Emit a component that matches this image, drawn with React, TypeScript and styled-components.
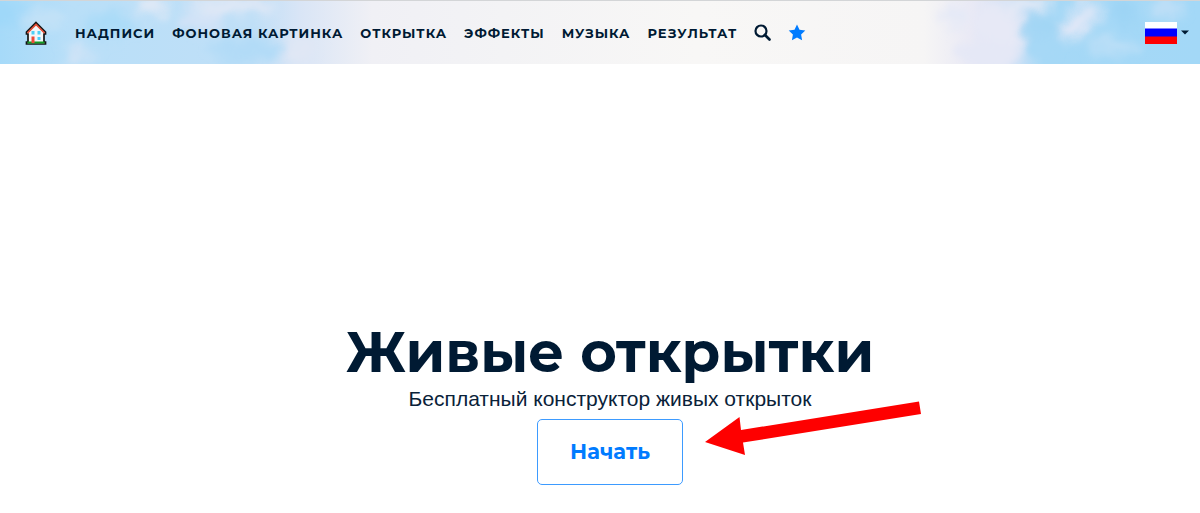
import React from "react";
import styled, { createGlobalStyle } from "styled-components";

const GlobalStyle = createGlobalStyle`
  *, *::before, *::after { box-sizing: border-box; }
  body {
    margin: 0;
    background: #fff;
    color: #001a33;
    font-family: Montserrat, Inter, "Liberation Sans", sans-serif;
  }
`;

const Header = styled.header`
  position: relative;
  display: flex;
  align-items: center;
  min-height: 64px;
  padding: 0 11px 0 24px;
  border-top: 1px solid #d3d5d7;
  overflow: hidden;
`;

const SkyArt = styled.svg`
  position: absolute;
  inset: 0;
  width: 100%;
  height: 100%;
  z-index: -1;
`;

const HomeLink = styled.a`
  display: flex;
  margin-right: 27px;
`;

const Nav = styled.nav`
  display: flex;
  flex: 1;
  align-items: center;
  gap: 17px;
`;

const NavLink = styled.a`
  display: flex;
  color: #001a33;
  font-size: 13px;
  font-weight: 700;
  line-height: 20px;
  letter-spacing: 1px;
  text-transform: uppercase;
  text-decoration: none;
  white-space: nowrap;
`;

const IconButton = styled.button`
  display: flex;
  padding: 0;
  border: 0;
  background: none;
  color: #001a33;
  cursor: pointer;
`;

const LanguageButton = styled(IconButton)`
  align-items: center;
  gap: 4px;
`;

const Hero = styled.main`
  display: flex;
  flex-direction: column;
  align-items: center;
  padding: 256px 0 28px 20px;
`;

const Title = styled.h1`
  margin: 0;
  font-size: 56px;
  font-weight: 700;
  line-height: 64px;
  text-align: center;
`;

const Subtitle = styled.p`
  margin: 0 0 6px;
  color: #0a2239;
  font-family: "Liberation Sans", Arial, sans-serif;
  font-size: 21px;
  line-height: 29px;
  text-align: center;
`;

const Action = styled.div`
  position: relative;
`;

const StartButton = styled.button`
  display: block;
  padding: 16px 32px;
  border: 1px solid #3d9bff;
  border-radius: 5px;
  background: #fff;
  color: #007bff;
  font-family: inherit;
  font-size: 21px;
  font-weight: 700;
  line-height: 32px;
  cursor: pointer;
`;

const Arrow = styled.svg`
  position: absolute;
  left: 100%;
  bottom: 29px;
  margin-left: 21px;
`;

const Sky = () => (
  <SkyArt viewBox="0 0 1200 64" preserveAspectRatio="none" aria-hidden="true">
    <defs>
      <linearGradient id="sky" x1="0" x2="1" y1="0" y2="0">
        <stop offset="0" stopColor="#a6daf9" />
        <stop offset="0.06" stopColor="#b9dff8" />
        <stop offset="0.21" stopColor="#bfdff7" />
        <stop offset="0.25" stopColor="#d9e5f6" />
        <stop offset="0.31" stopColor="#f0f0f5" />
        <stop offset="0.42" stopColor="#f3f3f5" />
        <stop offset="0.58" stopColor="#f8f7f6" />
        <stop offset="0.77" stopColor="#f6f5f5" />
        <stop offset="0.81" stopColor="#e9e9f5" />
        <stop offset="0.84" stopColor="#d5e2f6" />
        <stop offset="0.87" stopColor="#a5d8f6" />
        <stop offset="1" stopColor="#a3d8f7" />
      </linearGradient>
      <filter id="soft" x="-10%" y="-50%" width="120%" height="200%">
        <feGaussianBlur stdDeviation="6" />
        <feTurbulence type="fractalNoise" baseFrequency="0.04" numOctaves="2" seed="4" result="noise" />
        <feGaussianBlur in="SourceGraphic" stdDeviation="6" result="clouds" />
        <feDisplacementMap in="clouds" in2="noise" scale="20" xChannelSelector="R" yChannelSelector="G" />
      </filter>
    </defs>
    <rect width="1200" height="64" fill="url(#sky)" />
    <g filter="url(#soft)">
      <ellipse cx="0" cy="12" rx="22" ry="14" fill="#9fd8f9" />
      <ellipse cx="110" cy="24" rx="24" ry="12" fill="#aadbf8" />
      <ellipse cx="150" cy="6" rx="18" ry="10" fill="#e0e9f6" />
      <ellipse cx="202" cy="21" rx="22" ry="9" fill="#d4e3f7" />
      <ellipse cx="230" cy="4" rx="42" ry="9" fill="#e0e8f6" />
      <ellipse cx="78" cy="53" rx="14" ry="8" fill="#d2e4f7" />
      <ellipse cx="42" cy="20" rx="22" ry="8" fill="#c5e2f7" />
      <ellipse cx="248" cy="50" rx="38" ry="14" fill="#b2dbf7" />
      <ellipse cx="300" cy="52" rx="16" ry="12" fill="#e0e7f5" />
      <ellipse cx="955" cy="14" rx="12" ry="10" fill="#e4e9f7" />
      <ellipse cx="1000" cy="28" rx="26" ry="22" fill="#e7e9f6" />
      <ellipse cx="990" cy="54" rx="34" ry="14" fill="#e5e8f6" />
      <ellipse cx="1040" cy="26" rx="24" ry="8" fill="#a1d5f4" />
      <ellipse cx="1042" cy="46" rx="15" ry="14" fill="#a6d8f6" />
      <ellipse cx="1028" cy="4" rx="24" ry="8" fill="#e0e8f6" />
      <ellipse cx="1086" cy="12" rx="16" ry="14" fill="#d7e5f7" />
      <ellipse cx="1074" cy="28" rx="12" ry="10" fill="#e3e8f7" />
      <ellipse cx="1112" cy="46" rx="26" ry="8" fill="#bcdff7" />
      <ellipse cx="1124" cy="12" rx="14" ry="14" fill="#9dd4f5" />
      <ellipse cx="1166" cy="8" rx="16" ry="10" fill="#bfdff7" />
    </g>
  </SkyArt>
);

const House = () => (
  <svg width="24" height="26" viewBox="0 0 24 26" aria-hidden="true">
    <path d="M12 2.500 21.500 12V14H20V22H21.500V24H2.500V22H4V14H2.500V12Z" fill="#f5f6f8" stroke="#141414" strokeWidth="1.700" />
    <path d="M3.500 13 12 4.500 20.500 13" fill="none" stroke="#e2472f" strokeWidth="1.600" />
    <path d="M7.500 11h3v3.500h-3zM13.500 11h3v3.500h-3zM13.500 17h3v3h-3z" fill="#4fd0f7" />
    <path d="M3.500 21.500h17V23.500h-17z" fill="#109c22" />
    <path d="M7.500 16.500h3V23h-3z" fill="#ee4a38" />
  </svg>
);

const sections = ["Надписи", "Фоновая картинка", "Открытка", "Эффекты", "Музыка", "Результат"];

export default function App() {
  return (
    <>
      <GlobalStyle />
      <Header>
        <Sky />
        <HomeLink href="#home" aria-label="Главная">
          <House />
        </HomeLink>
        <Nav>
          {sections.map((name) => (
            <NavLink key={name} href="#section">{name}</NavLink>
          ))}
          <IconButton type="button" aria-label="Поиск">
            <svg width="17" height="17" viewBox="0 0 17 17" aria-hidden="true">
              <circle cx="7" cy="7" r="5.500" fill="none" stroke="currentColor" strokeWidth="2.200" />
              <path d="m11 11 4.500 4.500" stroke="currentColor" strokeWidth="2.600" strokeLinecap="round" />
            </svg>
          </IconButton>
          <NavLink href="#favorites" aria-label="Избранное">
            <svg width="18" height="17" viewBox="0 0 18 17" aria-hidden="true">
              <path
                d="m9 .5 2.500 5.200 5.800.8-4.200 4 1 5.700L9 13.500l-5.100 2.700 1-5.700-4.200-4 5.800-.8Z"
                fill="#007bff"
              />
            </svg>
          </NavLink>
        </Nav>
        <LanguageButton type="button" aria-label="Язык: русский">
          <svg width="32" height="22" viewBox="0 0 32 22" aria-hidden="true">
            <path d="M0 0h32v22H0z" fill="#fff" />
            <path d="M0 6.500h32V15H0z" fill="#0000fe" />
            <path d="M0 14.500h32V22H0z" fill="#fe0000" />
          </svg>
          <svg width="8" height="5" viewBox="0 0 8 5" aria-hidden="true">
            <path d="M0 .5h8L4 4.500Z" fill="currentColor" />
          </svg>
        </LanguageButton>
      </Header>
      <Hero>
        <Title>Живые открытки</Title>
        <Subtitle>Бесплатный конструктор живых открыток</Subtitle>
        <Action>
          <StartButton type="button">Начать</StartButton>
          <Arrow width="218" height="55" viewBox="0 0 218 55" aria-hidden="true">
            <path d="M1 41 35.500 16 37 29 215 0.500 217 13 39 41.500 41 54Z" fill="#fe0000" />
          </Arrow>
        </Action>
      </Hero>
    </>
  );
}
